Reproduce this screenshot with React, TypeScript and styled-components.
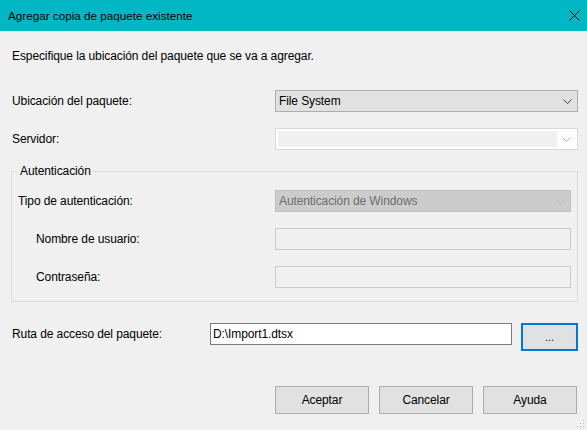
import styled, { createGlobalStyle } from 'styled-components';

const GlobalStyle = createGlobalStyle`
  html, body {
    margin: 0;
    padding: 0;
    background: #f0f0f0;
  }

  body {
    font-family: 'Liberation Sans', Arial, sans-serif;
    font-size: 12px;
    letter-spacing: -0.1px;
    color: #000000;
  }
`;

const StyledWindow = styled.div`
  width: 587px;
  height: 430px;
  position: relative;
  display: flex;
  flex-direction: column;
  background-color: #f0f0f0;
  overflow: hidden;
`;

const StyledTitleBar = styled.div`
  height: 31px;
  flex-shrink: 0;
  display: flex;
  flex-direction: row;
  align-items: center;
  justify-content: space-between;
  padding: 0 7px 0 8px;
  background-color: #00b7c3;
  font-size: 11.7px;
  letter-spacing: 0;
  color: #000000;
`;

const StyledBody = styled.div`
  flex: 1;
  display: flex;
  flex-direction: column;
  padding: 17px 9px 0 12px;
`;

const StyledIntro = styled.div`
  height: 16px;
  line-height: 16px;
  margin-bottom: 26px;
`;

const StyledRow = styled.div<{ $indent?: number; $labelWidth?: number }>`
  display: grid;
  grid-template-columns: ${(p) => p.$labelWidth ?? 263}px 1fr;
  align-items: center;
  min-height: 22px;

  & > .label {
    padding-left: ${(p) => p.$indent ?? 0}px;
    line-height: 16px;
  }
`;

const StyledRows = styled.div`
  display: flex;
  flex-direction: column;
  gap: 16px;
`;

const StyledCombo = styled.div<{ $variant: 'normal' | 'empty' | 'disabled' }>`
  height: 22px;
  box-sizing: border-box;
  display: flex;
  flex-direction: row;
  align-items: stretch;
  border: 1px solid
    ${(p) => (p.$variant === 'normal' ? '#adadad' : p.$variant === 'empty' ? '#d9d9d9' : '#bfbfbf')};
  background-color: ${(p) =>
    p.$variant === 'normal' ? '#e1e1e1' : p.$variant === 'empty' ? '#ffffff' : '#cccccc'};
  padding: ${(p) => (p.$variant === 'empty' ? '2px' : '0')};
  color: ${(p) => (p.$variant === 'disabled' ? '#6d6d6d' : '#000000')};

  & > .value {
    flex: 1;
    display: flex;
    align-items: center;
    padding-left: ${(p) => (p.$variant === 'empty' ? '1px' : '3px')};
    background-color: ${(p) => (p.$variant === 'empty' ? '#f0f0f0' : 'transparent')};
  }

  & > .arrow {
    width: ${(p) => (p.$variant === 'empty' ? '18px' : '20px')};
    display: flex;
    align-items: center;
    justify-content: center;
  }
`;

const StyledInput = styled.div<{ $disabled?: boolean }>`
  height: 22px;
  box-sizing: border-box;
  display: flex;
  align-items: center;
  padding-left: 2px;
  border: 1px solid ${(p) => (p.$disabled ? '#cccccc' : '#7a7a7a')};
  background-color: ${(p) => (p.$disabled ? '#f0f0f0' : '#ffffff')};
`;

const StyledGroup = styled.fieldset`
  margin: 13px 0 0 -1px;
  padding: 11px 6px 13px 6px;
  border: 1px solid #dcdcdc;
  min-width: 0;

  & > legend {
    padding: 0 2px;
    margin-left: 0;
    line-height: 16px;
  }
`;

const StyledPathRow = styled.div`
  display: flex;
  flex-direction: row;
  align-items: flex-start;
  margin-top: 21px;

  & > .label {
    width: 198px;
    line-height: 22px;
  }

  & > .field {
    width: 302px;
  }
`;

const StyledButton = styled.button<{ $focused?: boolean; $width?: number }>`
  width: ${(p) => p.$width ?? 94}px;
  height: 28px;
  box-sizing: border-box;
  margin: 0;
  padding: 0;
  border: ${(p) => (p.$focused ? '2px solid #0078d7' : '1px solid #adadad')};
  background-color: #e1e1e1;
  font-family: inherit;
  font-size: 12px;
  letter-spacing: -0.1px;
  color: #000000;
`;

const StyledBrowse = styled(StyledButton)`
  margin-left: 9px;
  font-size: 11px;
`;

const StyledFooter = styled.div`
  display: flex;
  flex-direction: row;
  justify-content: flex-end;
  gap: 10px;
  margin-top: 35px;
  padding-right: 1px;
`;

const StyledGrip = styled.svg`
  position: absolute;
  right: 2px;
  bottom: 2px;
`;

function Chevron({ color }: { color: string }) {
  return (
    <svg width="9" height="5" viewBox="0 0 9 5">
      <polyline points="0.5,0.5 4.5,4.5 8.5,0.5" fill="none" stroke={color} strokeWidth="1" />
    </svg>
  );
}

function CloseIcon() {
  return (
    <svg width="11" height="11" viewBox="0 0 11 11">
      <line x1="0.5" y1="0.5" x2="10.5" y2="10.5" stroke="#000" strokeWidth="1" />
      <line x1="10.5" y1="0.5" x2="0.5" y2="10.5" stroke="#000" strokeWidth="1" />
    </svg>
  );
}

export default function App() {
  return (
    <>
      <GlobalStyle />
      <StyledWindow>
        <StyledTitleBar>
          <span>Agregar copia de paquete existente</span>
          <CloseIcon />
        </StyledTitleBar>

        <StyledBody>
          <StyledIntro>Especifique la ubicación del paquete que se va a agregar.</StyledIntro>

          <StyledRows>
            <StyledRow>
              <span className="label">Ubicación del paquete:</span>
              <StyledCombo $variant="normal">
                <span className="value">File System</span>
                <span className="arrow">
                  <Chevron color="#3c3c3c" />
                </span>
              </StyledCombo>
            </StyledRow>

            <StyledRow>
              <span className="label">Servidor:</span>
              <StyledCombo $variant="empty">
                <span className="value" />
                <span className="arrow">
                  <Chevron color="#b4b4b4" />
                </span>
              </StyledCombo>
            </StyledRow>
          </StyledRows>

          <StyledGroup>
            <legend>Autenticación</legend>
            <StyledRows>
              <StyledRow $labelWidth={257}>
                <span className="label">Tipo de autenticación:</span>
                <StyledCombo $variant="disabled">
                  <span className="value">Autenticación de Windows</span>
                  <span className="arrow">
                    <Chevron color="#b9b9b9" />
                  </span>
                </StyledCombo>
              </StyledRow>

              <StyledRow $labelWidth={257} $indent={18}>
                <span className="label">Nombre de usuario:</span>
                <StyledInput $disabled />
              </StyledRow>

              <StyledRow $labelWidth={257} $indent={18}>
                <span className="label">Contraseña:</span>
                <StyledInput $disabled />
              </StyledRow>
            </StyledRows>
          </StyledGroup>

          <StyledPathRow>
            <span className="label">Ruta de acceso del paquete:</span>
            <div className="field">
              <StyledInput>D:\Import1.dtsx</StyledInput>
            </div>
            <StyledBrowse $focused $width={57}>
              ...
            </StyledBrowse>
          </StyledPathRow>

          <StyledFooter>
            <StyledButton>Aceptar</StyledButton>
            <StyledButton>Cancelar</StyledButton>
            <StyledButton>Ayuda</StyledButton>
          </StyledFooter>
        </StyledBody>

        <StyledGrip width="8" height="8" viewBox="0 0 8 8">
          <rect x="6" y="0" width="1" height="1" fill="#b8b8b8" />
          <rect x="3" y="3" width="1" height="1" fill="#b8b8b8" />
          <rect x="6" y="3" width="1" height="1" fill="#b8b8b8" />
          <rect x="0" y="6" width="1" height="1" fill="#b8b8b8" />
          <rect x="3" y="6" width="1" height="1" fill="#b8b8b8" />
          <rect x="6" y="6" width="1" height="1" fill="#b8b8b8" />
        </StyledGrip>
      </StyledWindow>
    </>
  );
}
